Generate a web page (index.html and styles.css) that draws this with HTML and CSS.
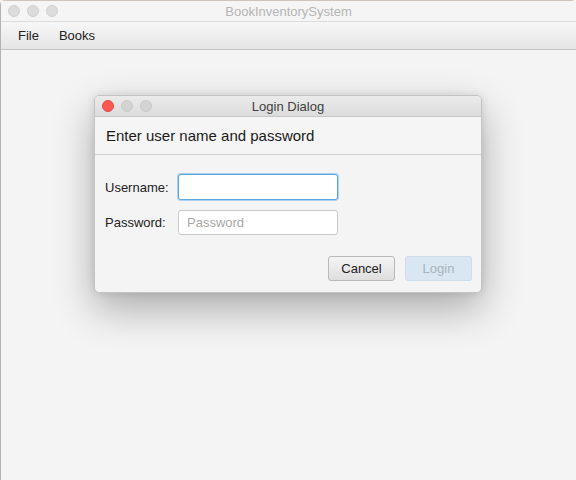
FILE: index.html
```html
<!DOCTYPE html>
<html>
<head>
<meta charset="utf-8">
<link rel="stylesheet" href="styles.css">
</head>
<body>
<div class="window">
  <div class="titlebar">
    <div class="lights">
      <span class="light"></span><span class="light"></span><span class="light"></span>
    </div>
    <div class="title">BookInventorySystem</div>
  </div>
  <div class="menubar">
    <span class="menu">File</span>
    <span class="menu">Books</span>
  </div>
  <div class="content"></div>

  <div class="dialog">
    <div class="dtitlebar">
      <div class="lights dl">
        <span class="light close"></span><span class="light"></span><span class="light"></span>
      </div>
      <div class="dtitle">Login Dialog</div>
    </div>
    <div class="dheader">Enter user name and password</div>
    <div class="dform">
      <div class="row">
        <label class="lbl">Username:</label>
        <div class="field focused"></div>
      </div>
      <div class="row">
        <label class="lbl">Password:</label>
        <div class="field"><span class="ph">Password</span></div>
      </div>
      <div class="buttons">
        <div class="btn">Cancel</div>
        <div class="btn disabled">Login</div>
      </div>
    </div>
  </div>
</div>
</body>
</html>
```
FILE: styles.css
```css
* { box-sizing: border-box; }
html, body { margin: 0; padding: 0; }
body {
  width: 576px; height: 480px; overflow: hidden;
  font-family: "Liberation Sans", Arial, sans-serif;
  background: #f4f4f4;
}
.window {
  position: relative;
  width: 576px; height: 480px;
  display: flex; flex-direction: column;
  border-top: 1px solid #cdc4bc;
  border-left: 1px solid #b9b2ac;
  border-radius: 5px 5px 0 0;
  background: #f4f4f4;
}
.titlebar {
  height: 21px;
  background: #f5f5f5;
  border-bottom: 1px solid #dcdcdc;
  display: flex; align-items: center; justify-content: center;
  position: relative;
}
.lights {
  position: absolute; left: 7px; top: 4px;
  display: flex; gap: 7px;
}
.light {
  width: 12px; height: 12px; border-radius: 50%;
  background: #dcdcdc;
  border: 1px solid #d0d0d0;
}
.title { font-size: 13px; color: #b4b4b4; }
.menubar {
  height: 28px;
  background: linear-gradient(#f7f7f7, #e5e5e5);
  border-bottom: 1px solid #c4c4c4;
  display: flex; align-items: center;
  padding-left: 17px; gap: 20px;
  font-size: 13px; color: #222;
}
.content { flex: 1; background: #f4f4f4; }

.dialog {
  position: absolute; left: 93px; top: 94px;
  width: 388px; height: 198px;
  background: #f4f4f4;
  border: 1px solid #c4c4c4;
  border-radius: 5px;
  box-shadow: 0 16px 40px rgba(0,0,0,0.30), 0 0 8px rgba(0,0,0,0.10);
  display: flex; flex-direction: column;
  overflow: hidden;
}
.dtitlebar {
  height: 21px;
  background: linear-gradient(#ebebeb, #dcdcdc);
  border-bottom: 1px solid #c6c6c6;
  position: relative;
  display: flex; align-items: center; justify-content: center;
}
.dl { left: 7px; top: 4px; }
.dl .light { background: #d3d3d3; border-color: #c8c8c8; }
.dl .light.close { background: #fc5753; border-color: #e24a46; }
.dtitle { font-size: 13px; color: #404040; }
.dheader {
  height: 38px;
  border-bottom: 1px solid #cfcfcf;
  display: flex; align-items: center;
  padding-left: 11px;
  font-size: 15px; color: #1a1a1a;
  background: #f5f5f5;
}
.dform {
  flex: 1;
  padding: 19px 9px 10px 10px;
  display: flex; flex-direction: column;
  gap: 10px;
}
.row { display: flex; align-items: center; }
.lbl { width: 73px; font-size: 13px; color: #222; }
.field {
  width: 160px; height: 25px;
  background: #fff;
  border: 1px solid #c9c9c9;
  border-radius: 3px;
  display: flex; align-items: center;
  padding-left: 8px;
}
.field.focused {
  height: 26px;
  border: 1px solid #5ba7e0;
  box-shadow: 0 0 0 1px #a9d1f2;
}
.ph { font-size: 13px; color: #a8a8a8; }
.buttons {
  margin-top: 11px;
  display: flex; justify-content: flex-end; gap: 10px;
}
.btn {
  width: 67px; height: 25px;
  border: 1px solid #b9b9b9;
  border-radius: 3px;
  background: linear-gradient(#f4f4f4, #dedede);
  display: flex; align-items: center; justify-content: center;
  font-size: 13px; color: #222;
}
.btn.disabled {
  background: #d8e7f1;
  border-color: #cddde9;
  color: #a9b4bc;
}
```
